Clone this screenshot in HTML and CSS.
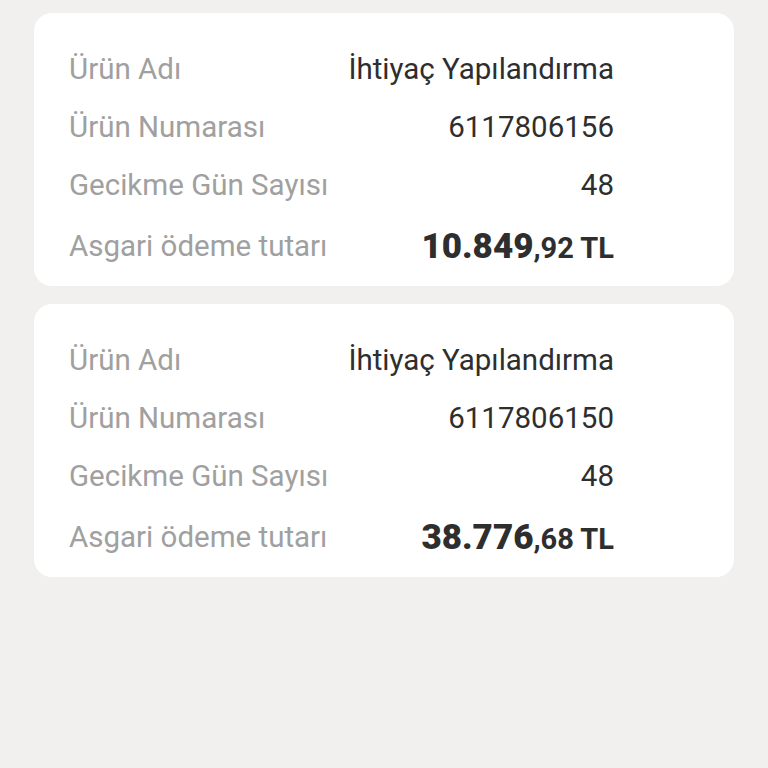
FILE: index.html
```html
<!DOCTYPE html>
<html lang="tr">
<head>
    <meta charset="UTF-8">
    <meta name="viewport" content="width=device-width, initial-scale=1.0">
    <title>Gecikmiş Ödemeler</title>
    <link rel="stylesheet" href="styles.css">
</head>
<body>
    <div class="debt-list">
        <!-- Ürün 1 -->
        <div class="debt-card">
            <div class="debt-row">
                <span class="debt-label">Ürün Adı</span>
                <span class="debt-value">İhtiyaç Yapılandırma</span>
            </div>
            <div class="debt-row">
                <span class="debt-label">Ürün Numarası</span>
                <span class="debt-value">6117806156</span>
            </div>
            <div class="debt-row">
                <span class="debt-label">Gecikme Gün Sayısı</span>
                <span class="debt-value">48</span>
            </div>
            <div class="debt-row debt-row-amount">
                <span class="debt-label">Asgari ödeme tutarı</span>
                <span class="debt-amount"><b>10.849</b>,92 TL</span>
            </div>
        </div>

        <!-- Ürün 2 -->
        <div class="debt-card">
            <div class="debt-row">
                <span class="debt-label">Ürün Adı</span>
                <span class="debt-value">İhtiyaç Yapılandırma</span>
            </div>
            <div class="debt-row">
                <span class="debt-label">Ürün Numarası</span>
                <span class="debt-value">6117806150</span>
            </div>
            <div class="debt-row">
                <span class="debt-label">Gecikme Gün Sayısı</span>
                <span class="debt-value">48</span>
            </div>
            <div class="debt-row debt-row-amount">
                <span class="debt-label">Asgari ödeme tutarı</span>
                <span class="debt-amount"><b>38.776</b>,68 TL</span>
            </div>
        </div>
    </div>
</body>
</html>
```

FILE: styles.css
```css
* {
    margin: 0;
    padding: 0;
    box-sizing: border-box;
}

body {
    font-family: Roboto, "Noto Sans", Arial, sans-serif;
    background: #f1f0ef;
    color: #2e2e2e;
    min-height: 100vh;
}

.debt-list {
    display: flex;
    flex-direction: column;
    gap: 18px;
    padding: 13px 34px;
}

/* Kart */
.debt-card {
    background: white;
    border-radius: 18px;
    padding: 27px 120px 8px 35px;
}

.debt-row {
    display: flex;
    justify-content: space-between;
    align-items: center;
    height: 58px;
    font-size: 29.5px;
}

.debt-row-amount {
    height: 64px;
}

.debt-label {
    color: #a0a0a0;
}

.debt-value {
    color: #2e2e2e;
}

.debt-amount {
    font-weight: bold;
    font-size: 29px;
    color: #2e2e2e;
}

.debt-amount b {
    font-size: 35px;
}
```
